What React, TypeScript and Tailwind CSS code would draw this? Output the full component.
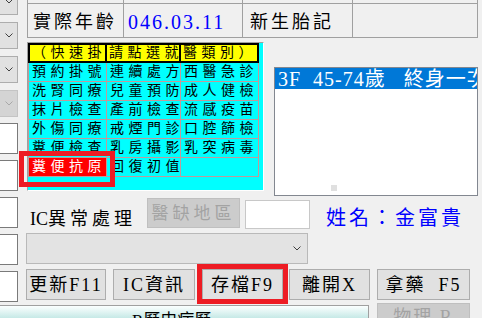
import React from "react";

const FONT = "font-['Liberation_Serif','Noto_Sans_CJK_TC',serif]";

function Chev({ c = "#404040" }: { c?: string }) {
  return (
    <svg width="8" height="5" viewBox="0 0 8 5">
      <polyline points="0.5,0.5 4,4 7.5,0.5" fill="none" stroke={c} strokeWidth="1" />
    </svg>
  );
}

const rows = [
  ["預約掛號", "連續處方", "西醫急診"],
  ["洗腎同療", "兒童預防", "成人健檢"],
  ["抹片檢查", "產前檢查", "流感疫苗"],
  ["外傷同療", "戒煙門診", "口腔篩檢"],
  ["糞便檢查", "乳房攝影", "乳突病毒"],
  ["糞便抗原", "回復初值", ""],
];

const colCls = [
  "w-[79px] border-l border-r border-b border-[#c09a9a]",
  "w-[74px] border-r border-b border-[#c09a9a]",
  "w-[78px] border-r border-b border-[#c09a9a]",
];

const headCls = ["w-[75px]", "w-[72px]", "w-[76px]"];

function Spaced({ text }: { text: string }) {
  return (
    <span className="flex gap-[4.5px]">
      {Array.from(text).map((ch, i) => (
        <span key={i}>{ch}</span>
      ))}
    </span>
  );
}

function Btn({ w, children, ml }: { w: string; ml: string; children: React.ReactNode }) {
  return (
    <div
      className={`${w} ${ml} h-[31px] bg-[#e1e1e1] border border-[#adadad] flex items-center justify-center text-[18px] leading-none tracking-[2px] whitespace-pre`}
    >
      {children}
    </div>
  );
}

export default function App() {
  return (
    <div className={`relative w-[482px] h-[318px] overflow-hidden bg-[#f0f0f0] text-black ${FONT}`}>
      <div className="flex h-[302px]">
        {/* left column */}
        <div className="w-[18px] shrink-0 flex flex-col">
          <div className="-mt-[12px] h-[27px] border border-l-0 border-[#adadad] bg-[#e1e1e1] flex items-center justify-center">
            <Chev />
          </div>
          <div className="mt-[7px] h-[27px] border border-l-0 border-[#adadad] bg-[#e1e1e1] flex items-center justify-center">
            <Chev />
          </div>
          <div className="mt-[7px] h-[27px] border border-l-0 border-[#adadad] bg-[#e1e1e1] flex items-center justify-center">
            <Chev />
          </div>
          <div className="mt-[7px] h-[27px] border border-l-0 border-[#c4c4c4] bg-[#d4d4d4] flex items-center justify-center">
            <Chev c="#a8a8a8" />
          </div>
          <div className="mt-[6px] h-[31px] border border-l-0 border-[#7a7a7a] bg-white" />
          <div className="mt-[6px] h-[31px] border border-l-0 border-[#7a7a7a] bg-white" />
          <div className="mt-[6px] h-[31px] border border-l-0 border-[#7a7a7a] bg-white" />
          <div className="mt-[6px] h-[31px] border border-l-0 border-[#7a7a7a] bg-white" />
          <div className="mt-[6px] h-[31px] border border-l-0 border-[#7a7a7a] bg-white" />
        </div>

        {/* main column */}
        <div className="ml-[8px] w-[456px] flex flex-col">
          {/* top grid */}
          <div className="ml-[1px] w-[451px] border-x border-b border-[#a0a0a0]">
            <div className="flex h-[4px] border-b border-[#a0a0a0]">
              <div className="w-[96px] border-r border-[#a0a0a0]" />
              <div className="w-[119px] border-r border-[#a0a0a0]" />
              <div className="w-[110px] border-r border-[#a0a0a0]" />
              <div className="flex-1" />
            </div>
            <div className="flex h-[33px]">
              <div className="w-[96px] border-r border-[#a0a0a0] flex items-center pl-[5px] pt-[3px] text-[18px] leading-none tracking-[3px] whitespace-nowrap">
                實際年齡
              </div>
              <div className="w-[119px] border-r border-[#a0a0a0] flex items-center pl-[4px] pt-[2px] text-[20px] leading-none tracking-[2px] text-[#0000ff] whitespace-nowrap">
                046.03.11
              </div>
              <div className="w-[110px] border-r border-[#a0a0a0] flex items-center pl-[7px] pt-[3px] text-[18px] leading-none tracking-[3px] whitespace-nowrap">
                新生胎記
              </div>
              <div className="flex-1" />
            </div>
          </div>

          {/* middle: quick table + list */}
          <div className="mt-[4px] flex items-start h-[154px]">
            <div className="ml-[1px] w-[237px] h-[149px] border border-t-[#a0a0a0] border-l-[#a0a0a0] border-r-white border-b-white bg-[#00ffff]">
              <div className="flex w-[231px] h-[20px] border-2 border-black bg-black gap-[2px]">
                {["（快速掛", "請點選就", "醫類別）"].map((t, i) => (
                  <div
                    key={i}
                    className={`${headCls[i]} bg-[#ffff00] flex items-center pl-[2px] text-[14px] leading-none whitespace-nowrap`}
                  >
                    <Spaced text={t} />
                  </div>
                ))}
              </div>
              {rows.map((r, ri) => (
                <div key={ri} className="flex h-[19px]">
                  {r.map((t, ci) => {
                    const red = ri === 5 && ci === 0;
                    return (
                      <div
                        key={ci}
                        className={`${colCls[ci]} ${red ? "bg-[#ff0000] text-white" : ""} flex items-center pl-[3px] text-[14px] leading-none whitespace-nowrap`}
                      >
                        {t ? <Spaced text={t} /> : null}
                      </div>
                    );
                  })}
                </div>
              ))}
            </div>

            <div className="relative ml-[10px] mt-[25px] w-[204px] h-[129px] border border-[#828790] bg-white overflow-hidden">
              <div className="h-[21px] bg-[#0078d7] text-white text-[20px] leading-none flex items-center pl-[3px] whitespace-pre tracking-[1px]">
                {"3F\u00a0\u00a045-74歲\u00a0\u00a0\u00a0終身一次"}
              </div>
              <div className="absolute left-[56px] top-[117px] w-[6px] h-[6px] bg-[#e0e0e0]" />
            </div>
          </div>

          {/* IC row */}
          <div className="flex h-[33px]">
            <div className="w-[121px] pl-[4px] pt-[12px] flex items-center text-[18px] leading-none whitespace-nowrap">
              <span>IC</span>
              <span className="tracking-[4px]">異常處理</span>
            </div>
            <div className="mt-[2px] w-[93px] h-[30px] bg-[#cccccc] border border-[#bfbfbf] text-[#a3a3a3] flex items-center justify-center text-[17px] tracking-[4px] leading-none whitespace-nowrap">
              醫缺地區
            </div>
            <div className="ml-[5px] mt-[4px] w-[65px] h-[29px] bg-white border border-[#c8c8c8]" />
            <div className="ml-[16px] pt-[10px] flex items-center text-[20px] text-[#0000ff] tracking-[3px] leading-none whitespace-nowrap">
              姓名：金富貴
            </div>
          </div>

          {/* combo */}
          <div className="mt-[4px] w-[282px] h-[31px] bg-[#e3e3e3] border border-[#b9b9b9] flex items-center justify-end pr-[6px]">
            <Chev />
          </div>

          {/* buttons */}
          <div className="mt-[5px] flex">
            <Btn w="w-[80px]" ml="">更新F11</Btn>
            <Btn w="w-[82px]" ml="ml-[7px]">IC資訊</Btn>
            <Btn w="w-[81px]" ml="ml-[7px]">存檔F9</Btn>
            <Btn w="w-[81px]" ml="ml-[6px]">離開X</Btn>
            <Btn w="w-[93px]" ml="ml-[7px]">{"拿藥\u00a0\u00a0F5"}</Btn>
          </div>
        </div>
      </div>

      {/* bottom row */}
      <div className="flex items-start">
        <div className="mt-[3px] w-[369px] h-[20px] border-t border-r border-[#a0a0a0] bg-linear-to-b from-[#fbffff] to-[#a6dcd8] pl-[132px] pt-[6px] text-[17px] leading-none whitespace-nowrap">
          R歷史病歷
        </div>
        <div className="ml-[8px] mt-[1px] w-[93px] h-[30px] border border-[#bfbfbf] bg-[#cccccc] text-[#a3a3a3] flex justify-center pt-[4px] text-[18px] leading-none tracking-[2px] whitespace-pre">
          {"物理\u00a0R"}
        </div>
      </div>

      {/* annotation boxes */}
      <div className="absolute left-[19px] top-[151px] w-[96px] h-[36px] border-[5px] border-[#ed1c24]" />
      <div className="absolute left-[197px] top-[264px] w-[91px] h-[40px] border-[5px] border-[#ed1c24]" />
    </div>
  );
}
